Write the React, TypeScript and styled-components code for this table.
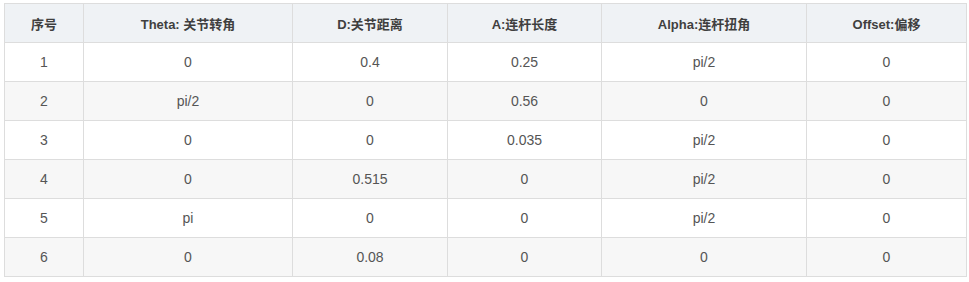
import React from 'react';
import styled, { createGlobalStyle } from 'styled-components';

const GlobalStyle = createGlobalStyle`
	html, body {
		margin: 0;
		padding: 0;
		background: #fff;
	}
	body {
		font-family: 'Liberation Sans', Arial, 'Noto Sans CJK SC', sans-serif;
	}
`;

const Page = styled.div`
	padding: 3px 4px;
`;

const StyledTable = styled.table`
	border-collapse: collapse;
	table-layout: fixed;
	width: 962px;
	border: 1px solid #dddddd;
`;

const HeadCell = styled.th`
	background-color: #eff2f5;
	border: 1px solid #dddddd;
	color: #3f3f3f;
	font-size: 13px;
	font-weight: bold;
	height: 38px;
	padding: 0 8px;
	text-align: center;
`;

const Row = styled.tr<{ striped: boolean }>`
	background-color: ${(props) => (props.striped ? '#f7f7f7' : '#ffffff')};
`;

const Cell = styled.td`
	border: 1px solid #dddddd;
	color: #555555;
	font-size: 14px;
	height: 38px;
	padding: 0 8px;
	text-align: center;
`;

const columns = [
	{ label: '序号', width: 79 },
	{ label: 'Theta: 关节转角', width: 209 },
	{ label: 'D:关节距离', width: 155 },
	{ label: 'A:连杆长度', width: 154 },
	{ label: 'Alpha:连杆扭角', width: 205 },
	{ label: 'Offset:偏移', width: 160 },
];

const rows = [
	['1', '0', '0.4', '0.25', 'pi/2', '0'],
	['2', 'pi/2', '0', '0.56', '0', '0'],
	['3', '0', '0', '0.035', 'pi/2', '0'],
	['4', '0', '0.515', '0', 'pi/2', '0'],
	['5', 'pi', '0', '0', 'pi/2', '0'],
	['6', '0', '0.08', '0', '0', '0'],
];

export default function App() {
	return (
		<>
			<GlobalStyle />
			<Page>
				<StyledTable>
					<colgroup>
						{columns.map((col) => (
							<col key={col.label} style={{ width: col.width }} />
						))}
					</colgroup>
					<thead>
						<tr>
							{columns.map((col) => (
								<HeadCell key={col.label}>{col.label}</HeadCell>
							))}
						</tr>
					</thead>
					<tbody>
						{rows.map((row, i) => (
							<Row key={row[0]} striped={i % 2 === 1}>
								{row.map((value, j) => (
									<Cell key={j}>{value}</Cell>
								))}
							</Row>
						))}
					</tbody>
				</StyledTable>
			</Page>
		</>
	);
}
